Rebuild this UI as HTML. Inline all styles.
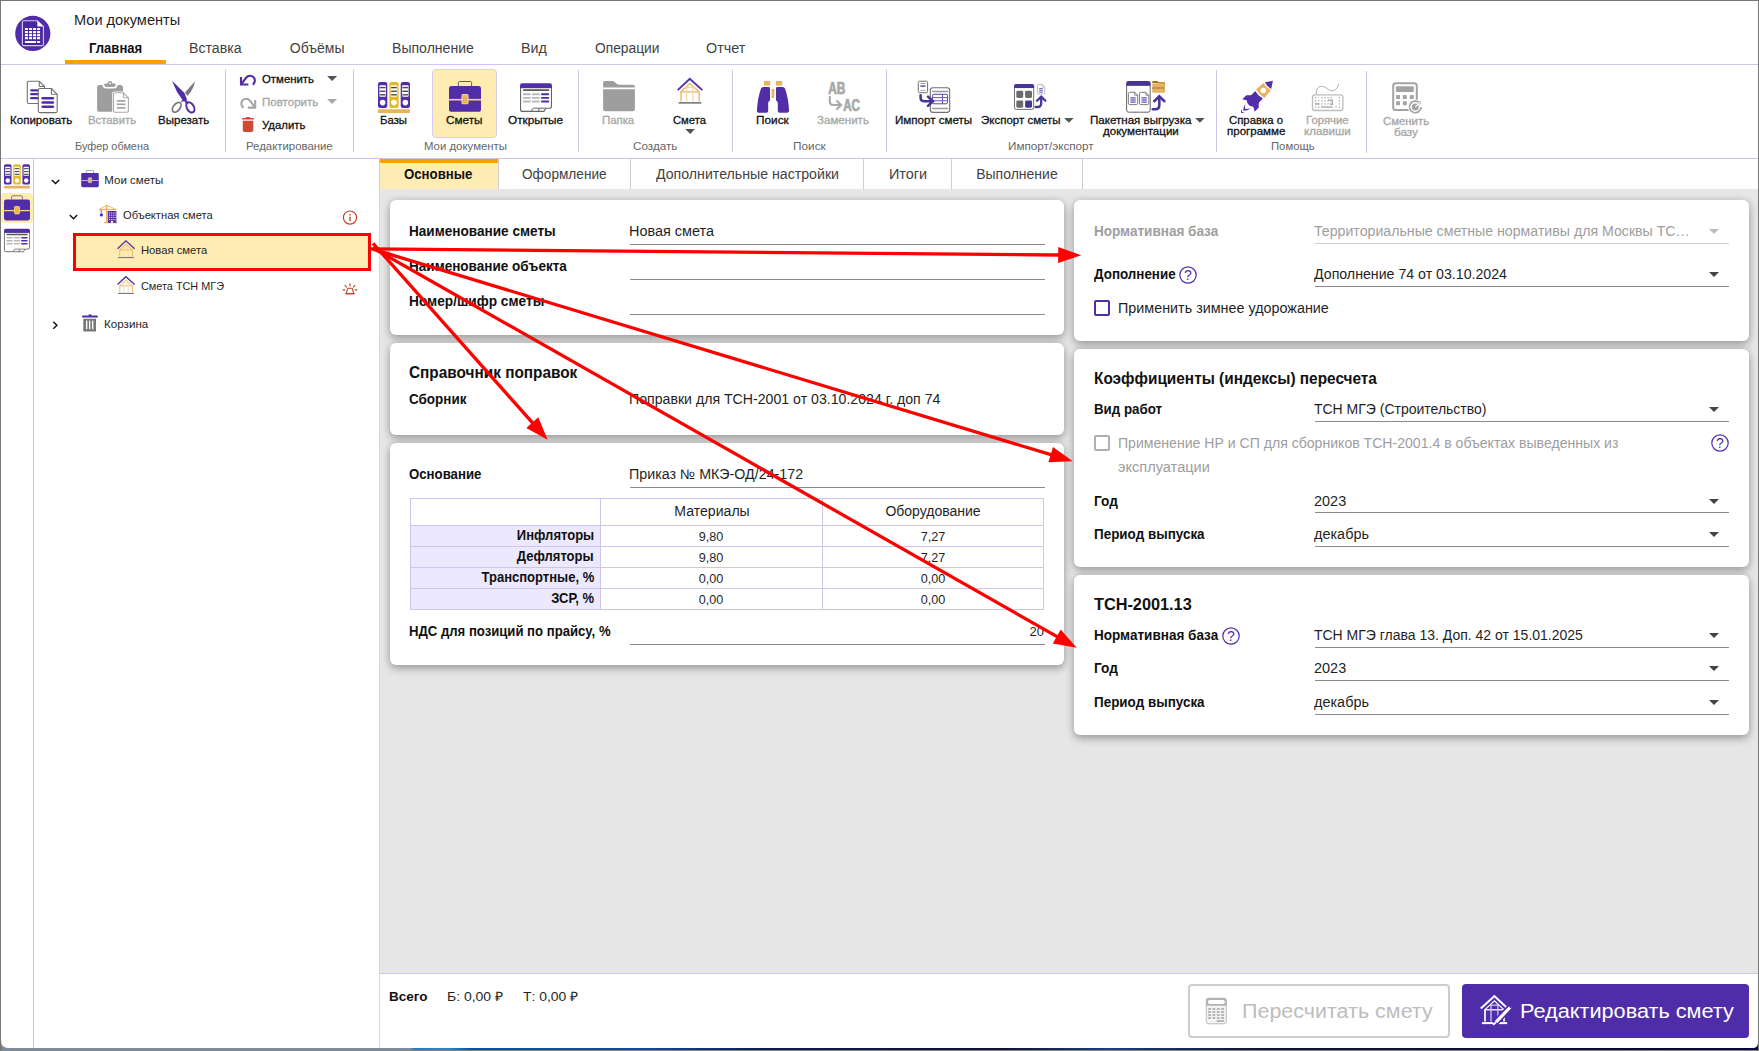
<!DOCTYPE html>
<html lang="ru"><head><meta charset="utf-8"><title>Мои документы</title>
<style>
html,body{margin:0;padding:0}
body{width:1759px;height:1051px;position:relative;overflow:hidden;background:#fff;font-family:"Liberation Sans", sans-serif;}
#app{position:absolute;left:0;top:0;width:1759px;height:1051px;overflow:hidden}
#app div{position:absolute;box-sizing:border-box}
#app svg{position:absolute;overflow:visible}
.t{position:absolute;white-space:nowrap;display:block}
</style></head>
<body><div id="app">
<div style="left:0px;top:0px;width:1759px;height:1051px;background:#fff;"></div>
<div style="left:0px;top:64px;width:1759px;height:1px;background:#d1c4e9;"></div>
<div style="left:0px;top:158px;width:1759px;height:1px;background:#d1c4e9;"></div>
<div style="left:65px;top:60px;width:101px;height:4px;background:#ffa000;"></div>
<div style="left:33px;top:159px;width:1px;height:889px;background:#d1c4e9;"></div>
<div style="left:1px;top:193px;width:32px;height:30px;background:#ffecb3;border-radius:3px;"></div>
<div style="left:379px;top:159px;width:1px;height:889px;background:#d8d8d8;"></div>
<div style="left:380px;top:159px;width:1379px;height:814px;background:#e6e6e6;"></div>
<div style="left:380px;top:159px;width:1379px;height:30px;background:#fff;"></div>
<div style="left:380px;top:159px;width:118px;height:30px;background:#ffecb3;"></div>
<div style="left:380px;top:159px;width:118px;height:4px;background:#ffa000;"></div>
<div style="left:379px;top:159px;width:1px;height:30px;background:#cfcfcf;"></div>
<div style="left:498px;top:159px;width:1px;height:30px;background:#cfcfcf;"></div>
<div style="left:630px;top:159px;width:1px;height:30px;background:#cfcfcf;"></div>
<div style="left:863px;top:159px;width:1px;height:30px;background:#cfcfcf;"></div>
<div style="left:951px;top:159px;width:1px;height:30px;background:#cfcfcf;"></div>
<div style="left:1082px;top:159px;width:1px;height:30px;background:#cfcfcf;"></div>
<div style="left:380px;top:973px;width:1379px;height:75px;background:#fff;"></div>
<div style="left:380px;top:973px;width:1379px;height:1px;background:#d1c4e9;"></div>
<div style="left:390px;top:200px;width:674px;height:135px;background:#fff;border-radius:6px;box-shadow:0 4px 9px rgba(0,0,0,.27),0 0 7px rgba(0,0,0,.13);"></div>
<div style="left:390px;top:343px;width:674px;height:92px;background:#fff;border-radius:6px;box-shadow:0 4px 9px rgba(0,0,0,.27),0 0 7px rgba(0,0,0,.13);"></div>
<div style="left:390px;top:443px;width:674px;height:222px;background:#fff;border-radius:6px;box-shadow:0 4px 9px rgba(0,0,0,.27),0 0 7px rgba(0,0,0,.13);"></div>
<div style="left:1074px;top:200px;width:675px;height:141px;background:#fff;border-radius:6px;box-shadow:0 4px 9px rgba(0,0,0,.27),0 0 7px rgba(0,0,0,.13);"></div>
<div style="left:1074px;top:349px;width:675px;height:218px;background:#fff;border-radius:6px;box-shadow:0 4px 9px rgba(0,0,0,.27),0 0 7px rgba(0,0,0,.13);"></div>
<div style="left:1074px;top:575px;width:675px;height:160px;background:#fff;border-radius:6px;box-shadow:0 4px 9px rgba(0,0,0,.27),0 0 7px rgba(0,0,0,.13);"></div>
<div style="left:225px;top:70px;width:1px;height:82px;background:#d1c4e9;"></div>
<div style="left:353px;top:70px;width:1px;height:82px;background:#d1c4e9;"></div>
<div style="left:578px;top:70px;width:1px;height:82px;background:#d1c4e9;"></div>
<div style="left:732px;top:70px;width:1px;height:82px;background:#d1c4e9;"></div>
<div style="left:886px;top:70px;width:1px;height:82px;background:#d1c4e9;"></div>
<div style="left:1216px;top:70px;width:1px;height:82px;background:#d1c4e9;"></div>
<div style="left:1366px;top:71px;width:1px;height:82px;background:#d1c4e9;"></div>
<div style="left:432px;top:69px;width:65px;height:69px;background:#ffecb3;border:1px solid #d9cdef;border-radius:4px;"></div>
<svg style="left:326.8px;top:76.1px" width="10.199999999999989" height="5.0" viewBox="0 0 10 5"><path d="M0 0H10L5 5Z" fill="#555"/></svg>
<svg style="left:326.8px;top:99.3px" width="10.199999999999989" height="5.0" viewBox="0 0 10 5"><path d="M0 0H10L5 5Z" fill="#aaa"/></svg>
<svg style="left:685px;top:129.2px" width="10.299999999999955" height="4.900000000000006" viewBox="0 0 10 5"><path d="M0 0H10L5 5Z" fill="#555"/></svg>
<svg style="left:1064.4px;top:118.3px" width="9.799999999999955" height="4.799999999999997" viewBox="0 0 10 5"><path d="M0 0H10L5 5Z" fill="#555"/></svg>
<svg style="left:1194.6px;top:118.3px" width="9.800000000000182" height="4.799999999999997" viewBox="0 0 10 5"><path d="M0 0H10L5 5Z" fill="#555"/></svg>
<div style="left:72.5px;top:232.5px;width:298px;height:38px;background:#ffecb3;border:3px solid #ff0000;"></div>
<div style="left:630px;top:244px;width:415px;height:1px;background:#8a8a8a;"></div>
<div style="left:630px;top:279px;width:415px;height:1px;background:#8a8a8a;"></div>
<div style="left:630px;top:314px;width:415px;height:1px;background:#8a8a8a;"></div>
<div style="left:630px;top:487px;width:415px;height:1px;background:#8a8a8a;"></div>
<div style="left:410px;top:498px;width:634px;height:112px;background:#fff;border:1px solid #d1c4e9;"></div>
<div style="left:411px;top:525px;width:190px;height:84px;background:#ece8fd;"></div>
<div style="left:410px;top:525px;width:634px;height:1px;background:#d1c4e9;"></div>
<div style="left:410px;top:546px;width:634px;height:1px;background:#d1c4e9;"></div>
<div style="left:410px;top:567px;width:634px;height:1px;background:#d1c4e9;"></div>
<div style="left:410px;top:588px;width:634px;height:1px;background:#d1c4e9;"></div>
<div style="left:600px;top:498px;width:1px;height:112px;background:#d1c4e9;"></div>
<div style="left:822px;top:498px;width:1px;height:112px;background:#d1c4e9;"></div>
<div style="left:630px;top:644px;width:415px;height:1px;background:#8a8a8a;"></div>
<div style="left:1314.7px;top:243px;width:414.29999999999995px;height:1px;background:#cfcfcf;"></div>
<svg style="left:1709px;top:229px" width="10" height="5" viewBox="0 0 10 5"><path d="M0 0H10L5 5Z" fill="#bdbdbd"/></svg>
<div style="left:1314.7px;top:286px;width:414.29999999999995px;height:1px;background:#8a8a8a;"></div>
<svg style="left:1709px;top:272px" width="10" height="5" viewBox="0 0 10 5"><path d="M0 0H10L5 5Z" fill="#444"/></svg>
<svg style="left:1179.2px;top:265.8px" width="18" height="18" viewBox="0 0 18 18"><circle cx="9" cy="9" r="8.2" fill="#fff" stroke="#512da8" stroke-width="1.2"/><text x="9" y="14" font-family="Liberation Sans, sans-serif" font-size="14" text-anchor="middle" fill="#512da8">?</text></svg>
<div style="left:1094px;top:299.9px;width:16px;height:16px;background:#fff;border:2px solid #512da8;border-radius:2px;"></div>
<div style="left:1314.7px;top:421px;width:414.29999999999995px;height:1px;background:#8a8a8a;"></div>
<svg style="left:1709px;top:407px" width="10" height="5" viewBox="0 0 10 5"><path d="M0 0H10L5 5Z" fill="#444"/></svg>
<div style="left:1094px;top:435px;width:16px;height:16px;background:#fff;border:2px solid #b0b0b0;border-radius:2px;"></div>
<svg style="left:1711px;top:434.3px" width="18" height="18" viewBox="0 0 18 18"><circle cx="9" cy="9" r="8.2" fill="#fff" stroke="#512da8" stroke-width="1.2"/><text x="9" y="14" font-family="Liberation Sans, sans-serif" font-size="14" text-anchor="middle" fill="#512da8">?</text></svg>
<div style="left:1314.7px;top:512px;width:414.29999999999995px;height:1px;background:#8a8a8a;"></div>
<svg style="left:1709px;top:499px" width="10" height="5" viewBox="0 0 10 5"><path d="M0 0H10L5 5Z" fill="#444"/></svg>
<div style="left:1314.7px;top:546px;width:414.29999999999995px;height:1px;background:#8a8a8a;"></div>
<svg style="left:1709px;top:532px" width="10" height="5" viewBox="0 0 10 5"><path d="M0 0H10L5 5Z" fill="#444"/></svg>
<div style="left:1314.7px;top:647px;width:414.29999999999995px;height:1px;background:#8a8a8a;"></div>
<svg style="left:1709px;top:633px" width="10" height="5" viewBox="0 0 10 5"><path d="M0 0H10L5 5Z" fill="#444"/></svg>
<svg style="left:1222.1px;top:627.2px" width="18" height="18" viewBox="0 0 18 18"><circle cx="9" cy="9" r="8.2" fill="#fff" stroke="#512da8" stroke-width="1.2"/><text x="9" y="14" font-family="Liberation Sans, sans-serif" font-size="14" text-anchor="middle" fill="#512da8">?</text></svg>
<div style="left:1314.7px;top:680px;width:414.29999999999995px;height:1px;background:#8a8a8a;"></div>
<svg style="left:1709px;top:666px" width="10" height="5" viewBox="0 0 10 5"><path d="M0 0H10L5 5Z" fill="#444"/></svg>
<div style="left:1314.7px;top:714px;width:414.29999999999995px;height:1px;background:#8a8a8a;"></div>
<svg style="left:1709px;top:700px" width="10" height="5" viewBox="0 0 10 5"><path d="M0 0H10L5 5Z" fill="#444"/></svg>
<div style="left:1188px;top:984px;width:262px;height:54px;background:#fff;border:2px solid #cdcdcd;border-radius:4px;"></div>
<div style="left:1462px;top:984px;width:287px;height:54px;background:#4f2da8;border-radius:4px;"></div>
<span class="t" id="t0" style="top:11.15px;font-size:14px;line-height:18px;color:#1f1f1f;left:74.488px;transform:scaleX(1.0410);transform-origin:0 0;">Мои документы</span>
<span class="t" id="t1" style="top:38.95px;font-size:14px;line-height:18px;color:#111;font-weight:700;left:88.58800000000001px;transform:scaleX(0.9344);transform-origin:0 0;">Главная</span>
<span class="t" id="t2" style="top:38.95px;font-size:14px;line-height:18px;color:#424242;left:189.488px;transform:scaleX(1.0106);transform-origin:0 0;">Вставка</span>
<span class="t" id="t3" style="top:38.95px;font-size:14px;line-height:18px;color:#424242;left:289.788px;">Объёмы</span>
<span class="t" id="t4" style="top:38.95px;font-size:14px;line-height:18px;color:#424242;left:391.688px;transform:scaleX(1.0051);transform-origin:0 0;">Выполнение</span>
<span class="t" id="t5" style="top:38.95px;font-size:14px;line-height:18px;color:#424242;left:520.688px;transform:scaleX(1.0226);transform-origin:0 0;">Вид</span>
<span class="t" id="t6" style="top:38.95px;font-size:14px;line-height:18px;color:#424242;left:595.188px;transform:scaleX(0.9832);transform-origin:0 0;">Операции</span>
<span class="t" id="t7" style="top:38.95px;font-size:14px;line-height:18px;color:#424242;left:706.188px;transform:scaleX(1.0275);transform-origin:0 0;">Отчет</span>
<span class="t" id="t8" style="top:112.89px;font-size:11px;line-height:14px;color:#111;-webkit-text-stroke:.28px #111;left:10.262px;transform:scaleX(1.0501);transform-origin:0 0;">Копировать</span>
<span class="t" id="t9" style="top:112.89px;font-size:11px;line-height:14px;color:#a6a6a6;-webkit-text-stroke:.28px #a6a6a6;left:88.362px;transform:scaleX(1.0313);transform-origin:0 0;">Вставить</span>
<span class="t" id="t10" style="top:112.89px;font-size:11px;line-height:14px;color:#111;-webkit-text-stroke:.28px #111;left:157.662px;transform:scaleX(1.0483);transform-origin:0 0;">Вырезать</span>
<span class="t" id="t11" style="top:71.69px;font-size:11px;line-height:14px;color:#111;-webkit-text-stroke:.28px #111;left:261.66200000000003px;transform:scaleX(1.0345);transform-origin:0 0;">Отменить</span>
<span class="t" id="t12" style="top:94.89px;font-size:11px;line-height:14px;color:#a6a6a6;-webkit-text-stroke:.28px #a6a6a6;left:261.66200000000003px;transform:scaleX(1.0484);transform-origin:0 0;">Повторить</span>
<span class="t" id="t13" style="top:117.79px;font-size:11px;line-height:14px;color:#111;-webkit-text-stroke:.28px #111;left:261.96200000000005px;transform:scaleX(1.0333);transform-origin:0 0;">Удалить</span>
<span class="t" id="t14" style="top:112.89px;font-size:11px;line-height:14px;color:#111;-webkit-text-stroke:.28px #111;left:379.66200000000003px;transform:scaleX(1.0316);transform-origin:0 0;">Базы</span>
<span class="t" id="t15" style="top:112.89px;font-size:11px;line-height:14px;color:#111;-webkit-text-stroke:.28px #111;left:446.262px;transform:scaleX(1.0672);transform-origin:0 0;">Сметы</span>
<span class="t" id="t16" style="top:112.89px;font-size:11px;line-height:14px;color:#111;-webkit-text-stroke:.28px #111;left:508.062px;transform:scaleX(1.0680);transform-origin:0 0;">Открытые</span>
<span class="t" id="t17" style="top:112.89px;font-size:11px;line-height:14px;color:#a6a6a6;-webkit-text-stroke:.28px #a6a6a6;left:602.1619999999999px;transform:scaleX(1.0335);transform-origin:0 0;">Папка</span>
<span class="t" id="t18" style="top:112.89px;font-size:11px;line-height:14px;color:#111;-webkit-text-stroke:.28px #111;left:673.062px;transform:scaleX(1.0187);transform-origin:0 0;">Смета</span>
<span class="t" id="t19" style="top:112.89px;font-size:11px;line-height:14px;color:#111;-webkit-text-stroke:.28px #111;left:755.962px;transform:scaleX(1.0760);transform-origin:0 0;">Поиск</span>
<span class="t" id="t20" style="top:112.89px;font-size:11px;line-height:14px;color:#a6a6a6;-webkit-text-stroke:.28px #a6a6a6;left:817.362px;transform:scaleX(1.0498);transform-origin:0 0;">Заменить</span>
<span class="t" id="t21" style="top:112.89px;font-size:11px;line-height:14px;color:#111;-webkit-text-stroke:.28px #111;left:895.262px;transform:scaleX(1.0535);transform-origin:0 0;">Импорт сметы</span>
<span class="t" id="t22" style="top:112.89px;font-size:11px;line-height:14px;color:#111;-webkit-text-stroke:.28px #111;left:980.862px;transform:scaleX(1.0452);transform-origin:0 0;">Экспорт сметы</span>
<span class="t" id="t23" style="top:112.89px;font-size:11px;line-height:14px;color:#111;-webkit-text-stroke:.28px #111;left:1090.2620000000002px;transform:scaleX(1.0515);transform-origin:0 0;">Пакетная выгрузка</span>
<span class="t" id="t24" style="top:123.99px;font-size:11px;line-height:14px;color:#111;-webkit-text-stroke:.28px #111;left:1102.862px;transform:scaleX(1.0494);transform-origin:0 0;">документации</span>
<span class="t" id="t25" style="top:112.89px;font-size:11px;line-height:14px;color:#111;-webkit-text-stroke:.28px #111;left:1229.362px;transform:scaleX(1.0319);transform-origin:0 0;">Справка о</span>
<span class="t" id="t26" style="top:123.99px;font-size:11px;line-height:14px;color:#111;-webkit-text-stroke:.28px #111;left:1227.0620000000001px;transform:scaleX(1.0487);transform-origin:0 0;">программе</span>
<span class="t" id="t27" style="top:112.89px;font-size:11px;line-height:14px;color:#a6a6a6;-webkit-text-stroke:.28px #a6a6a6;left:1305.962px;transform:scaleX(1.0340);transform-origin:0 0;">Горячие</span>
<span class="t" id="t28" style="top:123.99px;font-size:11px;line-height:14px;color:#a6a6a6;-webkit-text-stroke:.28px #a6a6a6;left:1303.962px;transform:scaleX(1.0532);transform-origin:0 0;">клавиши</span>
<span class="t" id="t29" style="top:113.99px;font-size:11px;line-height:14px;color:#a6a6a6;-webkit-text-stroke:.28px #a6a6a6;left:1383.362px;transform:scaleX(1.0331);transform-origin:0 0;">Сменить</span>
<span class="t" id="t30" style="top:124.59px;font-size:11px;line-height:14px;color:#a6a6a6;-webkit-text-stroke:.28px #a6a6a6;left:1394.362px;transform:scaleX(1.0637);transform-origin:0 0;">базу</span>
<span class="t" id="t31" style="top:138.99px;font-size:11px;line-height:14px;color:#666;left:75.46199999999999px;transform:scaleX(0.9900);transform-origin:0 0;">Буфер обмена</span>
<span class="t" id="t32" style="top:138.99px;font-size:11px;line-height:14px;color:#666;left:245.662px;transform:scaleX(1.0346);transform-origin:0 0;">Редактирование</span>
<span class="t" id="t33" style="top:138.99px;font-size:11px;line-height:14px;color:#666;left:423.862px;transform:scaleX(1.0355);transform-origin:0 0;">Мои документы</span>
<span class="t" id="t34" style="top:138.99px;font-size:11px;line-height:14px;color:#666;left:632.762px;transform:scaleX(1.0619);transform-origin:0 0;">Создать</span>
<span class="t" id="t35" style="top:138.99px;font-size:11px;line-height:14px;color:#666;left:792.862px;transform:scaleX(1.0727);transform-origin:0 0;">Поиск</span>
<span class="t" id="t36" style="top:138.99px;font-size:11px;line-height:14px;color:#666;left:1008.062px;transform:scaleX(1.0638);transform-origin:0 0;">Импорт/экспорт</span>
<span class="t" id="t37" style="top:138.99px;font-size:11px;line-height:14px;color:#666;left:1271.0620000000001px;transform:scaleX(1.0259);transform-origin:0 0;">Помощь</span>
<span class="t" id="t38" style="top:172.62px;font-size:11.5px;line-height:15px;color:#1f1f1f;left:104.333px;">Мои сметы</span>
<span class="t" id="t39" style="top:207.82px;font-size:11.5px;line-height:15px;color:#1f1f1f;left:122.533px;transform:scaleX(0.9698);transform-origin:0 0;">Объектная смета</span>
<span class="t" id="t40" style="top:242.82px;font-size:11.5px;line-height:15px;color:#1f1f1f;left:140.733px;transform:scaleX(0.9771);transform-origin:0 0;">Новая смета</span>
<span class="t" id="t41" style="top:278.72px;font-size:11.5px;line-height:15px;color:#1f1f1f;left:140.733px;transform:scaleX(0.9441);transform-origin:0 0;">Смета ТСН МГЭ</span>
<span class="t" id="t42" style="top:316.72px;font-size:11.5px;line-height:15px;color:#1f1f1f;left:104.333px;transform:scaleX(1.0123);transform-origin:0 0;">Корзина</span>
<span class="t" id="t43" style="top:164.95px;font-size:14px;line-height:18px;color:#111;font-weight:700;left:404.488px;transform:scaleX(0.9434);transform-origin:0 0;">Основные</span>
<span class="t" id="t44" style="top:164.95px;font-size:14px;line-height:18px;color:#424242;left:522.188px;transform:scaleX(0.9735);transform-origin:0 0;">Оформление</span>
<span class="t" id="t45" style="top:164.95px;font-size:14px;line-height:18px;color:#424242;left:655.788px;transform:scaleX(1.0111);transform-origin:0 0;">Дополнительные настройки</span>
<span class="t" id="t46" style="top:164.95px;font-size:14px;line-height:18px;color:#424242;left:888.688px;transform:scaleX(1.0289);transform-origin:0 0;">Итоги</span>
<span class="t" id="t47" style="top:164.95px;font-size:14px;line-height:18px;color:#424242;left:976.188px;">Выполнение</span>
<span class="t" id="t48" style="top:221.85px;font-size:14px;line-height:18px;color:#111;font-weight:700;left:409.188px;transform:scaleX(0.9705);transform-origin:0 0;">Наименование сметы</span>
<span class="t" id="t49" style="top:221.85px;font-size:14px;line-height:18px;color:#1f1f1f;left:629.188px;transform:scaleX(1.0313);transform-origin:0 0;">Новая смета</span>
<span class="t" id="t50" style="top:257.05px;font-size:14px;line-height:18px;color:#111;font-weight:700;left:409.188px;transform:scaleX(0.9671);transform-origin:0 0;">Наименование объекта</span>
<span class="t" id="t51" style="top:291.95px;font-size:14px;line-height:18px;color:#111;font-weight:700;left:409.188px;transform:scaleX(0.9770);transform-origin:0 0;">Номер/шифр сметы</span>
<span class="t" id="t52" style="top:362.16px;font-size:16px;line-height:21px;color:#111;font-weight:700;left:409.072px;transform:scaleX(0.9600);transform-origin:0 0;">Справочник поправок</span>
<span class="t" id="t53" style="top:390.15px;font-size:14px;line-height:18px;color:#111;font-weight:700;left:409.188px;transform:scaleX(0.9607);transform-origin:0 0;">Сборник</span>
<span class="t" id="t54" style="top:390.15px;font-size:14px;line-height:18px;color:#1f1f1f;left:629.188px;transform:scaleX(1.0095);transform-origin:0 0;">Поправки для ТСН-2001 от 03.10.2024 г. доп 74</span>
<span class="t" id="t55" style="top:464.55px;font-size:14px;line-height:18px;color:#111;font-weight:700;left:409.188px;transform:scaleX(0.9433);transform-origin:0 0;">Основание</span>
<span class="t" id="t56" style="top:464.55px;font-size:14px;line-height:18px;color:#1f1f1f;left:629.188px;transform:scaleX(1.0178);transform-origin:0 0;">Приказ № МКЭ-ОД/24-172</span>
<span class="t" id="t57" style="top:502.15px;font-size:14px;line-height:18px;color:#1f1f1f;left:711.5px;transform:translateX(-50%) scaleX(1.0071);transform-origin:50% 0;">Материалы</span>
<span class="t" id="t58" style="top:502.15px;font-size:14px;line-height:18px;color:#1f1f1f;left:933px;transform:translateX(-50%);transform-origin:50% 0;">Оборудование</span>
<span class="t" id="t59" style="top:526.15px;font-size:14px;line-height:18px;color:#111;font-weight:700;right:1165px;transform:scaleX(0.9300);transform-origin:100% 0;">Инфляторы</span>
<span class="t" id="t60" style="top:528.00px;font-size:13px;line-height:17px;color:#1f1f1f;left:711.1px;transform:translateX(-50%) scaleX(0.9719);transform-origin:50% 0;">9,80</span>
<span class="t" id="t61" style="top:528.00px;font-size:13px;line-height:17px;color:#1f1f1f;left:932.6px;transform:translateX(-50%) scaleX(0.9719);transform-origin:50% 0;">7,27</span>
<span class="t" id="t62" style="top:547.15px;font-size:14px;line-height:18px;color:#111;font-weight:700;right:1165px;transform:scaleX(0.9300);transform-origin:100% 0;">Дефляторы</span>
<span class="t" id="t63" style="top:549.00px;font-size:13px;line-height:17px;color:#1f1f1f;left:711.1px;transform:translateX(-50%) scaleX(0.9719);transform-origin:50% 0;">9,80</span>
<span class="t" id="t64" style="top:549.00px;font-size:13px;line-height:17px;color:#1f1f1f;left:932.6px;transform:translateX(-50%) scaleX(0.9719);transform-origin:50% 0;">7,27</span>
<span class="t" id="t65" style="top:568.15px;font-size:14px;line-height:18px;color:#111;font-weight:700;right:1165px;transform:scaleX(0.9300);transform-origin:100% 0;">Транспортные, %</span>
<span class="t" id="t66" style="top:570.00px;font-size:13px;line-height:17px;color:#1f1f1f;left:711.1px;transform:translateX(-50%) scaleX(0.9719);transform-origin:50% 0;">0,00</span>
<span class="t" id="t67" style="top:570.00px;font-size:13px;line-height:17px;color:#1f1f1f;left:932.6px;transform:translateX(-50%) scaleX(0.9719);transform-origin:50% 0;">0,00</span>
<span class="t" id="t68" style="top:589.15px;font-size:14px;line-height:18px;color:#111;font-weight:700;right:1165px;transform:scaleX(0.9300);transform-origin:100% 0;">ЗСР, %</span>
<span class="t" id="t69" style="top:591.00px;font-size:13px;line-height:17px;color:#1f1f1f;left:711.1px;transform:translateX(-50%) scaleX(0.9719);transform-origin:50% 0;">0,00</span>
<span class="t" id="t70" style="top:591.00px;font-size:13px;line-height:17px;color:#1f1f1f;left:932.6px;transform:translateX(-50%) scaleX(0.9719);transform-origin:50% 0;">0,00</span>
<span class="t" id="t71" style="top:622.05px;font-size:14px;line-height:18px;color:#111;font-weight:700;left:409.188px;transform:scaleX(0.9373);transform-origin:0 0;">НДС для позиций по прайсу, %</span>
<span class="t" id="t72" style="top:622.90px;font-size:13px;line-height:17px;color:#1f1f1f;right:715px;">20</span>
<span class="t" id="t73" style="top:221.75px;font-size:14px;line-height:18px;color:#9e9e9e;font-weight:700;left:1094.188px;transform:scaleX(0.9663);transform-origin:0 0;">Нормативная база</span>
<span class="t" id="t74" style="top:221.75px;font-size:14px;line-height:18px;color:#9e9e9e;left:1313.8880000000001px;transform:scaleX(1.0106);transform-origin:0 0;">Территориальные сметные нормативы для Москвы ТС…</span>
<span class="t" id="t75" style="top:264.65px;font-size:14px;line-height:18px;color:#111;font-weight:700;left:1094.188px;transform:scaleX(0.9561);transform-origin:0 0;">Дополнение</span>
<span class="t" id="t76" style="top:264.65px;font-size:14px;line-height:18px;color:#1f1f1f;left:1313.8880000000001px;transform:scaleX(1.0120);transform-origin:0 0;">Дополнение 74 от 03.10.2024</span>
<span class="t" id="t77" style="top:299.25px;font-size:14px;line-height:18px;color:#1f1f1f;left:1117.988px;transform:scaleX(1.0249);transform-origin:0 0;">Применить зимнее удорожание</span>
<span class="t" id="t78" style="top:368.16px;font-size:16px;line-height:21px;color:#111;font-weight:700;left:1094.072px;transform:scaleX(0.9609);transform-origin:0 0;">Коэффициенты (индексы) пересчета</span>
<span class="t" id="t79" style="top:399.85px;font-size:14px;line-height:18px;color:#111;font-weight:700;left:1094.188px;transform:scaleX(0.9518);transform-origin:0 0;">Вид работ</span>
<span class="t" id="t80" style="top:399.85px;font-size:14px;line-height:18px;color:#1f1f1f;left:1313.8880000000001px;">ТСН МГЭ (Строительство)</span>
<span class="t" id="t81" style="top:433.55px;font-size:14px;line-height:18px;color:#9e9e9e;left:1117.988px;transform:scaleX(1.0054);transform-origin:0 0;">Применение НР и СП для сборников ТСН-2001.4 в объектах выведенных из</span>
<span class="t" id="t82" style="top:458.15px;font-size:14px;line-height:18px;color:#9e9e9e;left:1117.988px;transform:scaleX(1.0419);transform-origin:0 0;">эксплуатации</span>
<span class="t" id="t83" style="top:491.75px;font-size:14px;line-height:18px;color:#111;font-weight:700;left:1094.188px;transform:scaleX(0.9755);transform-origin:0 0;">Год</span>
<span class="t" id="t84" style="top:491.75px;font-size:14px;line-height:18px;color:#1f1f1f;left:1313.8880000000001px;transform:scaleX(1.0335);transform-origin:0 0;">2023</span>
<span class="t" id="t85" style="top:525.15px;font-size:14px;line-height:18px;color:#111;font-weight:700;left:1094.188px;transform:scaleX(0.9602);transform-origin:0 0;">Период выпуска</span>
<span class="t" id="t86" style="top:525.15px;font-size:14px;line-height:18px;color:#1f1f1f;left:1313.8880000000001px;transform:scaleX(1.0323);transform-origin:0 0;">декабрь</span>
<span class="t" id="t87" style="top:593.76px;font-size:16px;line-height:21px;color:#111;font-weight:700;left:1094.072px;transform:scaleX(1.0172);transform-origin:0 0;">ТСН-2001.13</span>
<span class="t" id="t88" style="top:625.75px;font-size:14px;line-height:18px;color:#111;font-weight:700;left:1094.188px;transform:scaleX(0.9663);transform-origin:0 0;">Нормативная база</span>
<span class="t" id="t89" style="top:625.75px;font-size:14px;line-height:18px;color:#1f1f1f;left:1313.8880000000001px;">ТСН МГЭ глава 13. Доп. 42 от 15.01.2025</span>
<span class="t" id="t90" style="top:658.75px;font-size:14px;line-height:18px;color:#111;font-weight:700;left:1094.188px;transform:scaleX(0.9755);transform-origin:0 0;">Год</span>
<span class="t" id="t91" style="top:658.75px;font-size:14px;line-height:18px;color:#1f1f1f;left:1313.8880000000001px;transform:scaleX(1.0335);transform-origin:0 0;">2023</span>
<span class="t" id="t92" style="top:692.55px;font-size:14px;line-height:18px;color:#111;font-weight:700;left:1094.188px;transform:scaleX(0.9602);transform-origin:0 0;">Период выпуска</span>
<span class="t" id="t93" style="top:692.55px;font-size:14px;line-height:18px;color:#1f1f1f;left:1313.8880000000001px;transform:scaleX(1.0323);transform-origin:0 0;">декабрь</span>
<span class="t" id="t94" style="top:987.60px;font-size:13px;line-height:17px;color:#111;font-weight:700;left:388.94599999999997px;transform:scaleX(1.0392);transform-origin:0 0;">Всего</span>
<span class="t" id="t95" style="top:987.60px;font-size:13px;line-height:17px;color:#1f1f1f;left:446.64599999999996px;transform:scaleX(1.0746);transform-origin:0 0;">Б: 0,00 ₽</span>
<span class="t" id="t96" style="top:987.60px;font-size:13px;line-height:17px;color:#1f1f1f;left:523.246px;transform:scaleX(1.0715);transform-origin:0 0;">Т: 0,00 ₽</span>
<span class="t" id="t97" style="top:998.07px;font-size:20px;line-height:26px;color:#bdbdbd;left:1241.54px;transform:scaleX(1.0746);transform-origin:0 0;">Пересчитать смету</span>
<span class="t" id="t98" style="top:998.07px;font-size:20px;line-height:26px;color:#fff;left:1520.1399999999999px;transform:scaleX(1.0836);transform-origin:0 0;">Редактировать смету</span>
<svg style="left:0;top:0" width="1759" height="1051" viewBox="0 0 1759 1051"><circle cx="32.8" cy="33.4" r="17.6" fill="#4f2da8"/><path d="M23.8 20.8H37.3L43.4 26.6V44.2Q43.4 45.6 42 45.6H23.8Q22.4 45.6 22.4 44.2V22.2Q22.4 20.8 23.8 20.8Z" fill="#4527a0" stroke="#d6ccef" stroke-width="1.1"/><path d="M37.3 20.8V25.4Q37.3 26.6 38.5 26.6H43.4Z" fill="#fff"/><rect x="24.9" y="27.9" width="3.1" height="2.2" rx=".6" fill="#fff"/><rect x="29.0" y="27.9" width="3.1" height="2.2" rx=".6" fill="#fff"/><rect x="33.0" y="27.9" width="3.1" height="2.2" rx=".6" fill="#fff"/><rect x="37.0" y="27.9" width="3.1" height="2.2" rx=".6" fill="#fff"/><rect x="24.9" y="31.0" width="3.1" height="2.2" rx=".6" fill="#fff"/><rect x="29.0" y="31.0" width="3.1" height="2.2" rx=".6" fill="#fff"/><rect x="33.0" y="31.0" width="3.1" height="2.2" rx=".6" fill="#fff"/><rect x="37.0" y="31.0" width="3.1" height="2.2" rx=".6" fill="#fff"/><rect x="24.9" y="34.1" width="3.1" height="2.2" rx=".6" fill="#fff"/><rect x="29.0" y="34.1" width="3.1" height="2.2" rx=".6" fill="#fff"/><rect x="33.0" y="34.1" width="3.1" height="2.2" rx=".6" fill="#fff"/><rect x="37.0" y="34.1" width="3.1" height="2.2" rx=".6" fill="#fff"/><rect x="24.9" y="37.1" width="3.1" height="2.2" rx=".6" fill="#fff"/><rect x="29.0" y="37.1" width="3.1" height="2.2" rx=".6" fill="#fff"/><rect x="33.0" y="37.1" width="3.1" height="2.2" rx=".6" fill="#fff"/><rect x="37.0" y="37.1" width="3.1" height="2.2" rx=".6" fill="#fff"/><rect x="24.9" y="40.9" width="11.2" height="2.2" rx=".6" fill="#fff"/><rect x="37" y="40.9" width="3.1" height="2.2" rx=".6" fill="#fff"/><path d="M28.8 81.3H39.3L44.5 86.5V102.0Q44.5 103.5 43.0 103.5H28.8Q27.3 103.5 27.3 102.0V82.8Q27.3 81.3 28.8 81.3Z" fill="#fff" stroke="#707070" stroke-width="1.1" stroke-linejoin="round"/><path d="M39.3 81.3V85.75Q39.3 86.5 40.05 86.5H44.5" fill="none" stroke="#707070" stroke-width="1.1" stroke-linejoin="round"/><line x1="31.2" y1="90.3" x2="38" y2="90.3" stroke="#512da8" stroke-width="2.3" stroke-linecap="round"/><line x1="31.2" y1="94.2" x2="38" y2="94.2" stroke="#512da8" stroke-width="2.3" stroke-linecap="round"/><line x1="31.2" y1="98.2" x2="38" y2="98.2" stroke="#512da8" stroke-width="2.3" stroke-linecap="round"/><path d="M39.8 88.5H51.400000000000006L57.2 94.3V111.1Q57.2 112.6 55.7 112.6H39.8Q38.3 112.6 38.3 111.1V90.0Q38.3 88.5 39.8 88.5Z" fill="#fff" stroke="#707070" stroke-width="1.1" stroke-linejoin="round"/><path d="M51.400000000000006 88.5V93.55Q51.400000000000006 94.3 52.150000000000006 94.3H57.2" fill="none" stroke="#707070" stroke-width="1.1" stroke-linejoin="round"/><line x1="42.6" y1="98.2" x2="52.9" y2="98.2" stroke="#512da8" stroke-width="2.5" stroke-linecap="round"/><line x1="42.6" y1="102.5" x2="52.9" y2="102.5" stroke="#512da8" stroke-width="2.5" stroke-linecap="round"/><line x1="42.6" y1="106.8" x2="52.9" y2="106.8" stroke="#512da8" stroke-width="2.5" stroke-linecap="round"/><rect x="97.1" y="84.9" width="25.9" height="26.9" rx="2.6" fill="#9e9e9e"/><path d="M102.4 84H117.6Q117.6 88.6 113.6 88.6H106.4Q102.4 88.6 102.4 84Z" fill="#fff"/><path d="M104.2 85.2Q103.8 83.6 105.4 83.4H107.4Q108 81.1 110 81.1Q112 81.1 112.6 83.4H114.6Q116.2 83.6 115.8 85.2Q115.4 87 113.4 87H106.6Q104.6 87 104.2 85.2Z" fill="#9e9e9e"/><circle cx="110" cy="83.3" r=".9" fill="#fff"/><path d="M114.4 91.5H124.29999999999998L129.7 96.9V111.2Q129.7 113.4 127.49999999999999 113.4H114.4Q112.2 113.4 112.2 111.2V93.7Q112.2 91.5 114.4 91.5Z" fill="#fff"/><path d="M115.0 92.8H123.4L128.4 97.8V110.7Q128.4 112.2 126.9 112.2H115.0Q113.5 112.2 113.5 110.7V94.3Q113.5 92.8 115.0 92.8Z" fill="#fff" stroke="#a9a9a9" stroke-width="1.1" stroke-linejoin="round"/><path d="M123.4 92.8V97.05Q123.4 97.8 124.15 97.8H128.4" fill="none" stroke="#a9a9a9" stroke-width="1.1" stroke-linejoin="round"/><line x1="116.8" y1="100.9" x2="125.5" y2="100.9" stroke="#a3a3a3" stroke-width="1.7" stroke-linecap="butt"/><line x1="116.8" y1="104.3" x2="125.5" y2="104.3" stroke="#a3a3a3" stroke-width="1.7" stroke-linecap="butt"/><line x1="116.8" y1="107.9" x2="125.5" y2="107.9" stroke="#a3a3a3" stroke-width="1.7" stroke-linecap="butt"/><path d="M195 81.2L193.6 86.4Q191.4 91.6 187.5 96.1L185 92.5Z" fill="#7a7a7a"/><path d="M185.4 97.8L181.4 101.8" stroke="#7a7a7a" stroke-width="1.8" fill="none"/><ellipse cx="176.7" cy="107.3" rx="3.3" ry="5.6" transform="rotate(38 176.7 107.3)" fill="none" stroke="#7a7a7a" stroke-width="1.8"/><path d="M172 80.8L184.5 92.9L187 99.5L183.5 101.5L177 92Z" fill="#512da8"/><path d="M184.6 99.4L187 103" stroke="#512da8" stroke-width="2.4" fill="none"/><ellipse cx="190.4" cy="107.4" rx="3.5" ry="5.5" transform="rotate(-30 190.4 107.4)" fill="none" stroke="#512da8" stroke-width="2"/><g transform="translate(0 0.0)"><path d="M252.7 84.5A4.8 4.8 0 1 0 246.3 77.5L241.7 83.7" fill="none" stroke="#512da8" stroke-width="2.1" stroke-linecap="butt"/><path d="M241 77V84.5H248.4" fill="none" stroke="#512da8" stroke-width="2.1"/></g><g transform="translate(496.2 23.1) scale(-1 1)"><path d="M252.7 84.5A4.8 4.8 0 1 0 246.3 77.5L241.7 83.7" fill="none" stroke="#a6a6a6" stroke-width="2.1" stroke-linecap="butt"/><path d="M241 77V84.5H248.4" fill="none" stroke="#a6a6a6" stroke-width="2.1"/></g><path d="M241.9 119.6V118.6Q241.9 117.9 242.7 117.9H245.6Q246 117 247 117H249Q250 117 250.4 117.9H253.3Q254.1 117.9 254.1 118.6V119.6Z" fill="#cf4a30"/><path d="M242.8 120.8H253.3V130.2Q253.3 131.9 251.6 131.9H244.5Q242.8 131.9 242.8 130.2Z" fill="#cf4a30"/><g transform="translate(378 81.9) scale(1.0 1.0)"><rect x="0.0" y="0" width="9.3" height="26" rx="2.2" fill="#512da8"/><rect x="1.4" y="3.4" width="6.5" height="11.4" rx=".8" fill="#fff"/><rect x="1.8" y="5.0" width="5.7" height="1.4" fill="#4a4a4a"/><rect x="1.8" y="8.700000000000001" width="5.7" height="1.4" fill="#4a4a4a"/><rect x="1.8" y="12.200000000000001" width="5.7" height="1.4" fill="#4a4a4a"/><circle cx="4.65" cy="20.7" r="2.8" fill="#fff"/><rect x="11.35" y="0" width="9.3" height="26" rx="2.2" fill="#e6b822"/><rect x="12.75" y="3.4" width="6.5" height="11.4" rx=".8" fill="#fff"/><rect x="13.15" y="5.0" width="5.7" height="1.4" fill="#4a4a4a"/><rect x="13.15" y="8.700000000000001" width="5.7" height="1.4" fill="#4a4a4a"/><rect x="13.15" y="12.200000000000001" width="5.7" height="1.4" fill="#4a4a4a"/><circle cx="16.0" cy="20.7" r="2.8" fill="#fff"/><rect x="22.7" y="0" width="9.3" height="26" rx="2.2" fill="#512da8"/><rect x="24.099999999999998" y="3.4" width="6.5" height="11.4" rx=".8" fill="#fff"/><rect x="24.5" y="5.0" width="5.7" height="1.4" fill="#4a4a4a"/><rect x="24.5" y="8.700000000000001" width="5.7" height="1.4" fill="#4a4a4a"/><rect x="24.5" y="12.200000000000001" width="5.7" height="1.4" fill="#4a4a4a"/><circle cx="27.35" cy="20.7" r="2.8" fill="#fff"/><rect x="0" y="27.3" width="32" height="3.8" rx="1" fill="#e8b25f"/></g><g transform="translate(449 81) scale(1.0)"><path d="M9.4 5.1V1.6Q9.4 .5 10.6 .5H21.4Q22.6 .5 22.6 1.6V5.1" fill="none" stroke="#5f5f5f" stroke-width="1"/><rect x="0" y="5.1" width="32" height="25.7" rx="2.6" fill="#512da8"/><rect x="0" y="17.9" width="32" height="1.6" fill="#f6d48f"/><rect x="13" y="13.6" width="6" height="9.2" rx="1" fill="#e8b25f" stroke="#f6d48f" stroke-width="1.1"/></g><g transform="translate(520 83.2) scale(1.0)"><path d="M.55 4.6V26.2Q.55 28.2 2.55 28.2H24L26 25H29.45Q31.45 25 31.45 23V4.6Z" fill="#fff" stroke="#666" stroke-width="1.1" stroke-linejoin="round"/><path d="M11.6 28.2Q12 25 13.6 25H26M19.6 25L18.2 28.2" fill="none" stroke="#666" stroke-width="1"/><path d="M0 4.9V2.2Q0 0 2.2 0H29.8Q32 0 32 2.2V4.9Z" fill="#512da8"/><rect x="2.9" y="6" width="26.4" height="1.9" rx=".9" fill="#5a5a5a"/><rect x="2.9" y="10.05" width="7.8" height="1.9" rx=".6" fill="#b8b8b8"/><rect x="12" y="10.05" width="7.8" height="1.9" rx=".6" fill="#b8b8b8"/><rect x="21" y="10.05" width="8.2" height="1.9" rx=".9" fill="#512da8"/><rect x="2.9" y="13.75" width="7.8" height="1.9" rx=".6" fill="#b8b8b8"/><rect x="12" y="13.75" width="7.8" height="1.9" rx=".6" fill="#b8b8b8"/><rect x="21" y="13.75" width="8.2" height="1.9" rx=".9" fill="#512da8"/><rect x="2.9" y="17.35" width="7.8" height="1.9" rx=".6" fill="#b8b8b8"/><rect x="12" y="17.35" width="7.8" height="1.9" rx=".6" fill="#b8b8b8"/><rect x="21" y="17.35" width="8.2" height="1.9" rx=".9" fill="#512da8"/></g><path d="M603.1 87.6V83Q603.1 81.1 605 81.1H612.4Q614 81.1 615.2 82.4L616.4 83.6Q617.6 84.8 619.2 84.8H633Q634.9 84.8 634.9 86.7V87.6Z" fill="#9e9e9e"/><path d="M603.1 89.3H634.9V109Q634.9 111.2 632.7 111.2H605.3Q603.1 111.2 603.1 109Z" fill="#9e9e9e"/><g transform="translate(677.4 78.2) scale(1.0)"><path d="M.3 11.9L12.4 .6L24.9 11.9" fill="none" stroke="#512da8" stroke-width="1.9" stroke-linejoin="miter"/><path d="M3.4 13.5L12.4 5.3L21.8 13.5" fill="none" stroke="#e8b25f" stroke-width="1.3"/><path d="M3.6 13.7H21.8M3.6 13.2V23.2M21.8 13.2V23.2" fill="none" stroke="#e8b25f" stroke-width="1.3"/><path d="M9.2 8.4V23.2M15.5 8.4V23.2M8 9.2H17" fill="none" stroke="#f3d6a6" stroke-width="1.2"/><rect x="1.3" y="23.8" width="22.6" height="1.7" fill="#7d7d7d"/></g><rect x="764" y="81" width="6.2" height="4.6" fill="#e8b25f"/><rect x="775.9" y="81" width="6.3" height="4.6" fill="#e8b25f"/><rect x="771.6" y="89" width="2.7" height="9" fill="#e8b25f"/><path d="M763.4 87.1H768.6Q770 87.1 770 88.5V100.4Q768.2 101 768.2 103V110.8Q768.2 112.7 766.3 112.7H758.8Q756.8 112.7 756.9 110.6Q757.6 98 761 88.6Q761.6 87.1 763.4 87.1Z" fill="#512da8"/><g transform="translate(1546 0) scale(-1 1)"><path d="M763.4 87.1H768.6Q770 87.1 770 88.5V100.4Q768.2 101 768.2 103V110.8Q768.2 112.7 766.3 112.7H758.8Q756.8 112.7 756.9 110.6Q757.6 98 761 88.6Q761.6 87.1 763.4 87.1Z" fill="#512da8"/></g><text x="828.2" y="93.6" font-family="Liberation Sans, sans-serif" font-weight="700" font-size="15.6" fill="#a8a8a8" textLength="17.2" lengthAdjust="spacingAndGlyphs" stroke="#a8a8a8" stroke-width=".7">AB</text><text x="843.2" y="110.7" font-family="Liberation Sans, sans-serif" font-weight="700" font-size="15.6" fill="#a8a8a8" textLength="16.8" lengthAdjust="spacingAndGlyphs" stroke="#a8a8a8" stroke-width=".7">AC</text><path d="M829.8 96V101.4Q829.8 104.9 833.4 104.9H840.4" fill="none" stroke="#a8a8a8" stroke-width="2"/><path d="M836.4 100.4L841.2 104.9L836.4 109.4" fill="none" stroke="#a8a8a8" stroke-width="2"/><rect x="918.3" y="81.2" width="9.3" height="11.5" rx="1.4" fill="#fff" stroke="#707070" stroke-width="1"/><line x1="920.4" y1="83.5" x2="925.5" y2="83.5" stroke="#9a9a9a" stroke-width="0.9" stroke-linecap="butt"/><line x1="920.4" y1="86.1" x2="925.5" y2="86.1" stroke="#6a52b8" stroke-width="1.6" stroke-linecap="butt"/><line x1="920.4" y1="90.4" x2="925.5" y2="90.4" stroke="#9a9a9a" stroke-width="0.9" stroke-linecap="butt"/><rect x="930.3" y="87.7" width="19.4" height="24.7" rx="2.6" fill="#fff" stroke="#707070" stroke-width="1.1"/><line x1="932.6" y1="91.6" x2="947.6" y2="91.6" stroke="#9a9a9a" stroke-width="1.5" stroke-linecap="round"/><line x1="932.6" y1="108.6" x2="947.6" y2="108.6" stroke="#9a9a9a" stroke-width="1.5" stroke-linecap="round"/><rect x="932.4" y="94.3" width="15.2" height="9.5" rx="1.6" fill="#fff" stroke="#5e42b4" stroke-width="1"/><path d="M932.4 97.6H947.6M932.4 100.8H947.6M942.5 94.3V103.8" fill="none" stroke="#5e42b4" stroke-width=".9"/><path d="M920.6 95.2V97.4Q920.6 101.2 924.4 101.2H932" fill="none" stroke="#4a3596" stroke-width="2.6" stroke-linecap="round"/><path d="M928 96.6L932.9 101.2L928 105.9" fill="none" stroke="#4a3596" stroke-width="2.6" stroke-linecap="round" stroke-linejoin="miter"/><path d="M1014.5 87.6V107.6Q1014.5 109.4 1016.3 109.4H1031.9Q1033.7 109.4 1033.7 107.6V87.6Z" fill="#fff" stroke="#707070" stroke-width="1"/><path d="M1014 88V86Q1014 84 1016 84H1032.2Q1034.2 84 1034.2 86V88Z" fill="#4a3596"/><rect x="1016.3" y="90.7" width="6.9" height="7.3" rx="1.4" fill="#6b6b6b"/><rect x="1025.1" y="90.7" width="6.9" height="7.3" rx="1.4" fill="#6b6b6b"/><rect x="1016.3" y="100.4" width="6.9" height="7.3" rx="1.4" fill="#6b6b6b"/><rect x="1025.1" y="100.4" width="6.9" height="7.3" rx="1.4" fill="#4a3596"/><path d="M1038.6000000000001 84.4H1042.1000000000001L1044.7 87.0V92.89999999999999Q1044.7 94.1 1043.5 94.1H1038.6000000000001Q1037.4 94.1 1037.4 92.89999999999999V85.60000000000001Q1037.4 84.4 1038.6000000000001 84.4Z" fill="#fff" stroke="#b5b5b5" stroke-width="0.9" stroke-linejoin="round"/><path d="M1042.1000000000001 84.4V86.4Q1042.1000000000001 87.0 1042.7 87.0H1044.7" fill="none" stroke="#b5b5b5" stroke-width="0.9" stroke-linejoin="round"/><line x1="1039.2" y1="88.6" x2="1042.8" y2="88.6" stroke="#5e42b4" stroke-width="0.9" stroke-linecap="butt"/><line x1="1039.2" y1="90.4" x2="1042.8" y2="90.4" stroke="#5e42b4" stroke-width="0.9" stroke-linecap="butt"/><line x1="1039.2" y1="92.2" x2="1042.8" y2="92.2" stroke="#5e42b4" stroke-width="0.9" stroke-linecap="butt"/><path d="M1035.6 107H1037.4Q1041.2 107 1041.2 103.2V97.4" fill="none" stroke="#4a3596" stroke-width="2.3" stroke-linecap="round"/><path d="M1037 100.8L1041.2 96.6L1045.4 100.8" fill="none" stroke="#4a3596" stroke-width="2.3" stroke-linecap="round"/><path d="M1126.6 85.4V110Q1126.6 112.2 1128.8 112.2H1148Q1150.2 112.2 1150.2 110V85.4Z" fill="#fff" stroke="#666" stroke-width="1"/><path d="M1126.1 85.6V83.4Q1126.1 81 1128.5 81H1148.3Q1150.7 81 1150.7 83.4V85.6Z" fill="#4a3596"/><path d="M1129.7 92.3H1134.7L1137.7 95.3V103.3Q1137.7 104.6 1136.4 104.6H1129.7Q1128.4 104.6 1128.4 103.3V93.6Q1128.4 92.3 1129.7 92.3Z" fill="#fff" stroke="#707070" stroke-width="0.9" stroke-linejoin="round"/><path d="M1134.7 92.3V94.64999999999999Q1134.7 95.3 1135.3500000000001 95.3H1137.7" fill="none" stroke="#707070" stroke-width="0.9" stroke-linejoin="round"/><line x1="1130.4" y1="97.9" x2="1135.7" y2="97.9" stroke="#5e42b4" stroke-width="1.2" stroke-linecap="butt"/><line x1="1130.4" y1="100.0" x2="1135.7" y2="100.0" stroke="#5e42b4" stroke-width="1.2" stroke-linecap="butt"/><line x1="1130.4" y1="102.1" x2="1135.7" y2="102.1" stroke="#5e42b4" stroke-width="1.2" stroke-linecap="butt"/><path d="M1140.8 92.3H1145.8L1148.8 95.3V103.3Q1148.8 104.6 1147.5 104.6H1140.8Q1139.5 104.6 1139.5 103.3V93.6Q1139.5 92.3 1140.8 92.3Z" fill="#fff" stroke="#707070" stroke-width="0.9" stroke-linejoin="round"/><path d="M1145.8 92.3V94.64999999999999Q1145.8 95.3 1146.45 95.3H1148.8" fill="none" stroke="#707070" stroke-width="0.9" stroke-linejoin="round"/><line x1="1141.5" y1="97.9" x2="1146.8" y2="97.9" stroke="#5e42b4" stroke-width="1.2" stroke-linecap="butt"/><line x1="1141.5" y1="100.0" x2="1146.8" y2="100.0" stroke="#5e42b4" stroke-width="1.2" stroke-linecap="butt"/><line x1="1141.5" y1="102.1" x2="1146.8" y2="102.1" stroke="#5e42b4" stroke-width="1.2" stroke-linecap="butt"/><path d="M1152.2 83V82Q1152.2 81 1153.2 81H1157Q1157.8 81 1158.2 81.7L1158.6 82.3H1164.1Q1165.1 82.3 1165.1 83.3V84Z" fill="#a8741c"/><rect x="1152.2" y="83.4" width="12.9" height="9.4" rx=".8" fill="#e8b25f"/><line x1="1152.6" y1="88" x2="1164.8" y2="88" stroke="#70706a" stroke-width="1.3" stroke-dasharray="1.1 .9"/><path d="M1152.8 109.2H1155.2Q1159.3 109.2 1159.3 105.2V96.8" fill="none" stroke="#4a3596" stroke-width="2.6" stroke-linecap="round"/><path d="M1154.2 101.2L1159.3 96.2L1164.4 101.2" fill="none" stroke="#4a3596" stroke-width="2.6" stroke-linecap="round"/><path d="M1264.9 82.3L1272.9 80.8L1271.2 88.9Q1266.9 86.7 1264.9 82.3Z" fill="#512da8"/><path d="M1263.4 82.9Q1266.4 87.6 1270.9 90.3L1264.4 98Q1259 94.8 1256.1 89.5Z" fill="#e8b25f"/><circle cx="1263.3" cy="90.5" r="2.75" fill="#fff"/><path d="M1255.2 90.9Q1258 95.9 1262.9 98.6L1259 102.4Q1258.4 105 1258.8 107.6L1254.6 111.8Q1254.4 108.6 1253 106.4Q1249 106.6 1247 102.2Q1247.6 100.6 1246.4 100.2L1242.3 99.2L1246.3 95.2Q1249 95.5 1251.4 95Z" fill="#512da8"/><path d="M1245.7 103.1Q1243.4 107 1243.1 110.7Q1247.4 110.7 1250.9 108.2Q1246.6 109.5 1245 108.6Q1244.6 106 1245.7 103.1Z" fill="#512da8"/><path d="M1241.5 109.1Q1240.5 111.4 1241.1 112.8Q1243 113.1 1244.9 112.4Q1242.6 112.2 1241.9 111.4Z" fill="#512da8"/><rect x="1312.5" y="94.9" width="30.4" height="15.6" rx="2.6" fill="#fff" stroke="#bdbdbd" stroke-width="1.3"/><path d="M1316.1 94.6Q1316 86.6 1321.4 86.3Q1324.6 86.2 1328 89.2Q1331.4 92 1334.4 90.4Q1337.8 88.4 1338.8 83.8" fill="none" stroke="#b0b0b0" stroke-width="1"/><rect x="1315.0" y="97.0" width="1.3" height="1.3" fill="#a8a8a8"/><rect x="1321.4" y="97.0" width="1.3" height="1.3" fill="#a8a8a8"/><rect x="1324.4" y="97.0" width="1.3" height="1.3" fill="#a8a8a8"/><rect x="1327.4" y="97.0" width="1.3" height="1.3" fill="#a8a8a8"/><rect x="1330.4" y="97.0" width="1.3" height="1.3" fill="#a8a8a8"/><rect x="1338.8000000000002" y="97.0" width="1.3" height="1.3" fill="#a8a8a8"/><rect x="1315.0" y="100.2" width="1.3" height="1.3" fill="#a8a8a8"/><rect x="1318.0" y="100.2" width="1.3" height="1.3" fill="#a8a8a8"/><rect x="1321.4" y="100.2" width="1.3" height="1.3" fill="#a8a8a8"/><rect x="1324.4" y="100.2" width="1.3" height="1.3" fill="#a8a8a8"/><rect x="1327.4" y="100.2" width="1.3" height="1.3" fill="#a8a8a8"/><rect x="1330.4" y="100.2" width="1.3" height="1.3" fill="#a8a8a8"/><rect x="1338.8000000000002" y="100.2" width="1.3" height="1.3" fill="#a8a8a8"/><rect x="1315.0" y="103.30000000000001" width="1.3" height="1.3" fill="#a8a8a8"/><rect x="1318.0" y="103.30000000000001" width="1.3" height="1.3" fill="#a8a8a8"/><rect x="1321.4" y="103.30000000000001" width="1.3" height="1.3" fill="#a8a8a8"/><rect x="1324.4" y="103.30000000000001" width="1.3" height="1.3" fill="#a8a8a8"/><rect x="1327.4" y="103.30000000000001" width="1.3" height="1.3" fill="#a8a8a8"/><rect x="1330.4" y="103.30000000000001" width="1.3" height="1.3" fill="#a8a8a8"/><rect x="1338.8000000000002" y="103.30000000000001" width="1.3" height="1.3" fill="#a8a8a8"/><rect x="1315.0" y="106.4" width="1.3" height="1.3" fill="#a8a8a8"/><rect x="1318.0" y="106.4" width="1.3" height="1.3" fill="#a8a8a8"/><rect x="1335.4" y="106.4" width="1.3" height="1.3" fill="#a8a8a8"/><rect x="1338.8000000000002" y="106.4" width="1.3" height="1.3" fill="#a8a8a8"/><rect x="1321" y="106.3" width="11.6" height="1.4" fill="#a8a8a8"/><path d="M1328 100.2H1332.4V104.4H1330" fill="none" stroke="#a8a8a8" stroke-width="1.2"/><rect x="1315" y="103.2" width="4.4" height="1.4" fill="#a8a8a8"/><rect x="1393.2" y="83.2" width="23.6" height="26.8" rx="2.6" fill="#fff" stroke="#a3a3a3" stroke-width="2"/><rect x="1395.9" y="86.2" width="17.9" height="5.7" rx="1" fill="#a3a3a3"/><rect x="1396.1" y="95.1" width="3.9" height="3.9" fill="#a3a3a3"/><rect x="1402.9" y="95.1" width="3.9" height="3.9" fill="#a3a3a3"/><rect x="1409.8" y="95.1" width="3.9" height="3.9" fill="#a3a3a3"/><rect x="1396.1" y="101.3" width="3.9" height="3.9" fill="#a3a3a3"/><rect x="1402.9" y="101.3" width="3.9" height="3.9" fill="#a3a3a3"/><rect x="1409.8" y="101.3" width="3.9" height="3.9" fill="#a3a3a3"/><circle cx="1415.3" cy="106.9" r="7.4" fill="#fff"/><path d="M1419.4 102.8A5.8 5.8 0 1 0 1421.1 106.9" fill="none" stroke="#a3a3a3" stroke-width="1.6"/><path d="M1420.6 100.6V104.2H1417Z" fill="#a3a3a3"/><circle cx="1415.3" cy="106.9" r="3.5" fill="#a3a3a3"/><path d="M1415.3 106.9L1420 102.4" stroke="#fff" stroke-width="1.3"/><g transform="translate(4 164.2) scale(0.8125 0.785)"><rect x="0.0" y="0" width="9.3" height="26" rx="2.2" fill="#512da8"/><rect x="1.4" y="3.4" width="6.5" height="11.4" rx=".8" fill="#fff"/><rect x="1.8" y="5.0" width="5.7" height="1.4" fill="#4a4a4a"/><rect x="1.8" y="8.700000000000001" width="5.7" height="1.4" fill="#4a4a4a"/><rect x="1.8" y="12.200000000000001" width="5.7" height="1.4" fill="#4a4a4a"/><circle cx="4.65" cy="20.7" r="2.8" fill="#fff"/><rect x="11.35" y="0" width="9.3" height="26" rx="2.2" fill="#e6b822"/><rect x="12.75" y="3.4" width="6.5" height="11.4" rx=".8" fill="#fff"/><rect x="13.15" y="5.0" width="5.7" height="1.4" fill="#4a4a4a"/><rect x="13.15" y="8.700000000000001" width="5.7" height="1.4" fill="#4a4a4a"/><rect x="13.15" y="12.200000000000001" width="5.7" height="1.4" fill="#4a4a4a"/><circle cx="16.0" cy="20.7" r="2.8" fill="#fff"/><rect x="22.7" y="0" width="9.3" height="26" rx="2.2" fill="#512da8"/><rect x="24.099999999999998" y="3.4" width="6.5" height="11.4" rx=".8" fill="#fff"/><rect x="24.5" y="5.0" width="5.7" height="1.4" fill="#4a4a4a"/><rect x="24.5" y="8.700000000000001" width="5.7" height="1.4" fill="#4a4a4a"/><rect x="24.5" y="12.200000000000001" width="5.7" height="1.4" fill="#4a4a4a"/><circle cx="27.35" cy="20.7" r="2.8" fill="#fff"/><rect x="0" y="27.3" width="32" height="3.8" rx="1" fill="#e8b25f"/></g><g transform="translate(4 195.4) scale(0.8125)"><path d="M9.4 5.1V1.6Q9.4 .5 10.6 .5H21.4Q22.6 .5 22.6 1.6V5.1" fill="none" stroke="#5f5f5f" stroke-width="1"/><rect x="0" y="5.1" width="32" height="25.7" rx="2.6" fill="#512da8"/><rect x="0" y="17.9" width="32" height="1.6" fill="#f6d48f"/><rect x="13" y="13.6" width="6" height="9.2" rx="1" fill="#e8b25f" stroke="#f6d48f" stroke-width="1.1"/></g><g transform="translate(4 228.8) scale(0.8125)"><path d="M.55 4.6V26.2Q.55 28.2 2.55 28.2H24L26 25H29.45Q31.45 25 31.45 23V4.6Z" fill="#fff" stroke="#666" stroke-width="1.1" stroke-linejoin="round"/><path d="M11.6 28.2Q12 25 13.6 25H26M19.6 25L18.2 28.2" fill="none" stroke="#666" stroke-width="1"/><path d="M0 4.9V2.2Q0 0 2.2 0H29.8Q32 0 32 2.2V4.9Z" fill="#512da8"/><rect x="2.9" y="6" width="26.4" height="1.9" rx=".9" fill="#5a5a5a"/><rect x="2.9" y="10.05" width="7.8" height="1.9" rx=".6" fill="#b8b8b8"/><rect x="12" y="10.05" width="7.8" height="1.9" rx=".6" fill="#b8b8b8"/><rect x="21" y="10.05" width="8.2" height="1.9" rx=".9" fill="#512da8"/><rect x="2.9" y="13.75" width="7.8" height="1.9" rx=".6" fill="#b8b8b8"/><rect x="12" y="13.75" width="7.8" height="1.9" rx=".6" fill="#b8b8b8"/><rect x="21" y="13.75" width="8.2" height="1.9" rx=".9" fill="#512da8"/><rect x="2.9" y="17.35" width="7.8" height="1.9" rx=".6" fill="#b8b8b8"/><rect x="12" y="17.35" width="7.8" height="1.9" rx=".6" fill="#b8b8b8"/><rect x="21" y="17.35" width="8.2" height="1.9" rx=".9" fill="#512da8"/></g><path d="M51.8 179.9L55.5 183.5L59.2 179.9" fill="none" stroke="#111" stroke-width="1.45"/><path d="M69.8 215.10000000000002L73.5 218.70000000000002L77.2 215.10000000000002" fill="none" stroke="#111" stroke-width="1.45"/><path d="M53.300000000000004 321.8L56.900000000000006 325.3L53.300000000000004 328.8" fill="none" stroke="#111" stroke-width="1.45"/><g transform="translate(81.2 170.2) scale(0.55)"><path d="M9.4 5.1V1.6Q9.4 .5 10.6 .5H21.4Q22.6 .5 22.6 1.6V5.1" fill="none" stroke="#5f5f5f" stroke-width="1"/><rect x="0" y="5.1" width="32" height="25.7" rx="2.6" fill="#512da8"/><rect x="0" y="17.9" width="32" height="1.6" fill="#cfc3ee"/><rect x="13" y="13.6" width="6" height="9.2" rx="1" fill="#e8b25f" stroke="#cfc3ee" stroke-width="1.1"/></g><path d="M106.7 205.4V222.6" stroke="#e8b25f" stroke-width="1.5"/><path d="M99 209.5H116.4" stroke="#e8b25f" stroke-width="1.3"/><path d="M99.6 209.4L106.7 205.2L116 209.4" fill="none" stroke="#e8b25f" stroke-width=".9"/><path d="M104 222.7H117" stroke="#e8b25f" stroke-width="1.2"/><path d="M101.4 210V213" stroke="#9d8bd6" stroke-width="1.6"/><circle cx="101.4" cy="214.9" r="1.6" fill="#512da8"/><rect x="107.8" y="211" width="8.6" height="11.8" fill="#512da8"/><rect x="108.9" y="212.4" width="1" height="1.2" fill="#e9d9c8"/><rect x="110.80000000000001" y="212.4" width="1" height="1.2" fill="#e9d9c8"/><rect x="112.7" y="212.4" width="1" height="1.2" fill="#e9d9c8"/><rect x="114.60000000000001" y="212.4" width="1" height="1.2" fill="#e9d9c8"/><rect x="108.9" y="214.6" width="1" height="1.2" fill="#e9d9c8"/><rect x="110.80000000000001" y="214.6" width="1" height="1.2" fill="#e9d9c8"/><rect x="112.7" y="214.6" width="1" height="1.2" fill="#e9d9c8"/><rect x="114.60000000000001" y="214.6" width="1" height="1.2" fill="#e9d9c8"/><rect x="108.9" y="216.8" width="1" height="1.2" fill="#e9d9c8"/><rect x="110.80000000000001" y="216.8" width="1" height="1.2" fill="#e9d9c8"/><rect x="112.7" y="216.8" width="1" height="1.2" fill="#e9d9c8"/><rect x="114.60000000000001" y="216.8" width="1" height="1.2" fill="#e9d9c8"/><rect x="108.9" y="219" width="1" height="1.2" fill="#e9d9c8"/><rect x="110.80000000000001" y="219" width="1" height="1.2" fill="#e9d9c8"/><rect x="112.7" y="219" width="1" height="1.2" fill="#e9d9c8"/><rect x="114.60000000000001" y="219" width="1" height="1.2" fill="#e9d9c8"/><rect x="111" y="221" width="2" height="1.8" fill="#fff"/><g transform="translate(117.3 240.4) scale(0.695)"><path d="M.3 11.9L12.4 .6L24.9 11.9" fill="none" stroke="#512da8" stroke-width="1.9" stroke-linejoin="miter"/><path d="M3.4 13.5L12.4 5.3L21.8 13.5" fill="none" stroke="#e8b25f" stroke-width="1.3"/><path d="M3.6 13.7H21.8M3.6 13.2V23.2M21.8 13.2V23.2" fill="none" stroke="#e8b25f" stroke-width="1.3"/><path d="M9.2 8.4V23.2M15.5 8.4V23.2M8 9.2H17" fill="none" stroke="#f3d6a6" stroke-width="1.2"/><rect x="1.3" y="23.8" width="22.6" height="1.7" fill="#7d7d7d"/></g><g transform="translate(117.3 276.3) scale(0.695)"><path d="M.3 11.9L12.4 .6L24.9 11.9" fill="none" stroke="#512da8" stroke-width="1.9" stroke-linejoin="miter"/><path d="M3.4 13.5L12.4 5.3L21.8 13.5" fill="none" stroke="#e8b25f" stroke-width="1.3"/><path d="M3.6 13.7H21.8M3.6 13.2V23.2M21.8 13.2V23.2" fill="none" stroke="#e8b25f" stroke-width="1.3"/><path d="M9.2 8.4V23.2M15.5 8.4V23.2M8 9.2H17" fill="none" stroke="#f3d6a6" stroke-width="1.2"/><rect x="1.3" y="23.8" width="22.6" height="1.7" fill="#7d7d7d"/></g><path d="M82.1 317.6V316.2Q82.1 315.4 82.9 315.4H88.4Q88.6 314.2 90 314.2Q91.4 314.2 91.6 315.4H97Q97.8 315.4 97.8 316.2V317.6Z" fill="#512da8"/><path d="M83.3 318.7H96V330.4Q96 331.6 94.8 331.6H84.5Q83.3 331.6 83.3 330.4Z" fill="#777"/><rect x="86.05" y="320.6" width="1.3" height="8.6" fill="#fff"/><rect x="89.05" y="320.6" width="1.3" height="8.6" fill="#fff"/><rect x="92.05" y="320.6" width="1.3" height="8.6" fill="#fff"/><circle cx="350" cy="217.6" r="6.6" fill="none" stroke="#c0402a" stroke-width="1.2"/><rect x="349.3" y="214" width="1.4" height="1.5" fill="#c0402a"/><rect x="349.3" y="216.6" width="1.4" height="4.6" fill="#c0402a"/><path d="M347.9 288.2H352.1L353.8 293.6H346.2Z" fill="none" stroke="#c0402a" stroke-width="1.1" stroke-linejoin="round"/><path d="M345.2 293.8H354.8M350 283.2V286.2M344.8 285.2L346.9 287.3M355.2 285.2L353.1 287.3M342.6 289.9H345.3M354.7 289.9H357.4" fill="none" stroke="#c0402a" stroke-width="1.1"/><rect x="1206.3" y="998.2" width="20" height="25.6" rx="2.6" fill="#f3f3f3" stroke="#bdbdbd" stroke-width="1"/><path d="M1206 1005.7V1000.5Q1206 997.9 1208.6 997.9H1224Q1226.6 997.9 1226.6 1000.5V1005.7Z" fill="#b3b3b3"/><rect x="1207.9" y="1000.1" width="17" height="3.8" rx="1.8" fill="#fff"/><rect x="1208.1" y="1008.1" width="2.9" height="1.8" fill="#b3b3b3"/><rect x="1212.4" y="1008.1" width="2.9" height="1.8" fill="#b3b3b3"/><rect x="1216.8" y="1008.1" width="2.9" height="1.8" fill="#b3b3b3"/><rect x="1221.1" y="1008.1" width="2.9" height="1.8" fill="#b3b3b3"/><rect x="1208.1" y="1011.1" width="2.9" height="1.8" fill="#b3b3b3"/><rect x="1212.4" y="1011.1" width="2.9" height="1.8" fill="#b3b3b3"/><rect x="1216.8" y="1011.1" width="2.9" height="1.8" fill="#b3b3b3"/><rect x="1221.1" y="1011.1" width="2.9" height="1.8" fill="#b3b3b3"/><rect x="1208.1" y="1014.1" width="2.9" height="1.8" fill="#b3b3b3"/><rect x="1212.4" y="1014.1" width="2.9" height="1.8" fill="#b3b3b3"/><rect x="1216.8" y="1014.1" width="2.9" height="1.8" fill="#b3b3b3"/><rect x="1221.1" y="1014.1" width="2.9" height="1.8" fill="#b3b3b3"/><rect x="1208.1" y="1017.1" width="2.9" height="1.8" fill="#b3b3b3"/><rect x="1212.4" y="1017.1" width="2.9" height="1.8" fill="#b3b3b3"/><rect x="1216.8" y="1017.1" width="2.9" height="1.8" fill="#b3b3b3"/><rect x="1221.1" y="1017.1" width="2.9" height="1.8" fill="#b3b3b3"/><rect x="1216.7" y="1020.1" width="7.4" height="1.8" fill="#b3b3b3"/><path d="M1480.8 1008.6L1494.4 996.1L1506.6 1007.4" fill="none" stroke="#fff" stroke-width="2.1"/><path d="M1485 1009.6L1494.4 1000.8L1503.8 1009.6" fill="none" stroke="#fff" stroke-width="1.3"/><path d="M1484.6 1009.8H1504.2" stroke="#fff" stroke-width="1.3"/><path d="M1485 1009.4V1021.4M1504 1009.4V1021.4" stroke="#fff" stroke-width="1.7"/><path d="M1491 1004.6V1021.4M1497.9 1004.6V1021.4" stroke="#d9cff0" stroke-width="1.2"/><path d="M1490.2 1005.2H1498.6" stroke="#d9cff0" stroke-width="1.2"/><rect x="1481.9" y="1022.1" width="25.2" height="2" fill="#fff"/><path d="M1510.2 1007.2L1494.4 1023.8" stroke="#4f2da8" stroke-width="6.4"/><path d="M1510.4 1007L1496.2 1021.9" stroke="#fff" stroke-width="3.2"/><path d="M1497.4 1020.6L1493.2 1024.9L1495.4 1022.8" stroke="#fff" stroke-width="1.6" fill="none"/><path d="M1507.4 1004.6L1511.6 1008.6" stroke="#4f2da8" stroke-width="1"/></svg>
<div style="left:0;top:0;width:1759px;height:1px;background:#777"></div>
<div style="left:0;top:0;width:1px;height:1051px;background:#777"></div>
<div style="left:1758px;top:0;width:1px;height:1051px;background:#777"></div>
<div style="left:0;top:1048px;width:1759px;height:3px;background:linear-gradient(90deg,#7b8ca0 0,#7b8ca0 411px,#1f82c2 414px,#2a86bd 450px,#0c4fae 470px,#174a9a 640px,#0a1c50 770px,#0d1433 1000px,#1b3f80 1110px,#0e1830 1260px,#040838 1759px)"></div>
<div style="left:0;top:1050px;width:1759px;height:1px;background:#86837e"></div>
<svg style="left:0;top:1040px" width="11" height="11" viewBox="0 0 11 11"><path d="M0 0V11H11V8H8.5Q1 8 1 0Z" fill="#7b8ca0"/><path d="M0 0H1V5Q1 8 3 9L0 11Z" fill="#777"/></svg>
<svg style="left:1748px;top:1040px" width="11" height="11" viewBox="0 0 11 11"><path d="M10 2.5Q10 8 4.5 8H0V10H10Z" fill="#050a45"/><path d="M10 0H11V11H0V10H10Z" fill="#807f7a"/></svg>
<svg style="left:0;top:0" width="1759" height="1051" viewBox="0 0 1759 1051"><line x1="371.0" y1="248.9" x2="1060.2" y2="255.0" stroke="#ff0000" stroke-width="3.3"/><polygon points="1081.2,255.2 1058.1,263.0 1058.3,247.0" fill="#ff0000"/><line x1="373.0" y1="243.3" x2="533.7" y2="424.1" stroke="#ff0000" stroke-width="3.3"/><polygon points="547.6,439.8 526.3,427.9 538.3,417.3" fill="#ff0000"/><line x1="373.0" y1="249.2" x2="1052.6" y2="455.2" stroke="#ff0000" stroke-width="3.3"/><polygon points="1072.7,461.3 1048.4,462.3 1053.0,447.0" fill="#ff0000"/><line x1="373.0" y1="248.0" x2="1058.4" y2="637.4" stroke="#ff0000" stroke-width="3.3"/><polygon points="1076.7,647.8 1052.8,643.4 1060.7,629.5" fill="#ff0000"/></svg>
</div></body></html>
